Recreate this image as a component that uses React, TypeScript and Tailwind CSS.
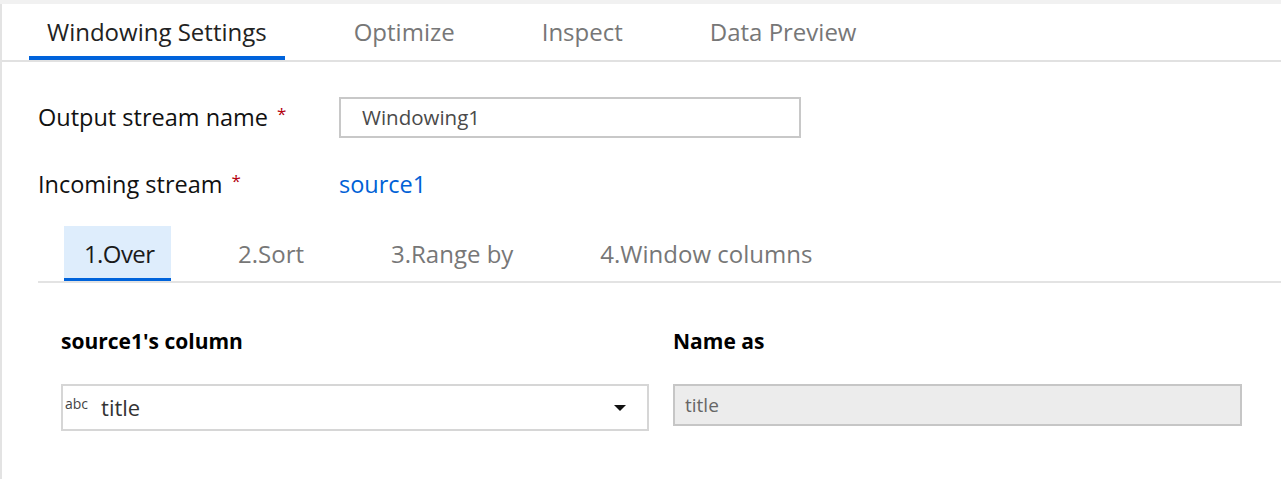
import React from 'react';

const mainTabs = ['Windowing Settings', 'Optimize', 'Inspect', 'Data Preview'];
const stepTabs = ['1.Over', '2.Sort', '3.Range by', '4.Window columns'];

export default function App() {
  return (
    <div
      className="w-[1281px] h-[479px] bg-white overflow-hidden"
      style={{ fontFamily: '"Open Sans", "Noto Sans", sans-serif' }}
    >
      {/* top strip */}
      <div className="h-[4px] bg-[#f1f1f1]" />

      <div className="h-[475px] border-l-2 border-[#e3e3e3]">
        {/* Main tabs */}
        <div className="flex gap-[51px] pl-[27px] border-b-2 border-[#e1e1e1] h-[58px]">
          {mainTabs.map((t, i) => (
            <div
              key={t}
              className={
                'px-[18px] flex items-center text-[24px] border-b-4 ' +
                (i === 0 ? 'text-[#222] border-[#0063db]' : 'text-[#777] border-transparent')
              }
            >
              <span className="mt-[3px]">{t}</span>
            </div>
          ))}
        </div>

        {/* Form rows */}
        <div className="pl-[36px] pt-[35px]">
          <div className="flex items-center h-[41px]">
            <div className="w-[301px] text-[23.5px] text-[#111] flex items-start">
              <span>Output stream name</span>
              <span className="text-[#b4000e] ml-[9px] text-[17px] mt-[1px]">*</span>
            </div>
            <div className="w-[462px] h-[41px] border-2 border-[#c8c8c8] flex items-center pl-[21px] text-[20.5px] text-[#4a4a4a]">
              Windowing1
            </div>
          </div>
          <div className="flex items-center h-[30px] mt-[32px]">
            <div className="w-[301px] text-[23.5px] text-[#111] flex items-start">
              <span>Incoming stream</span>
              <span className="text-[#b4000e] ml-[9px] text-[17px] mt-[1px]">*</span>
            </div>
            <div className="text-[23.5px] text-[#0061d6]">source1</div>
          </div>
        </div>

        {/* Step tabs */}
        <div className="ml-[36px] mt-[26px] flex gap-[47px] pl-[26px] border-b-2 border-[#e3e3e3] h-[57px]">
          {stepTabs.map((t, i) => (
            <div
              key={t}
              className={
                'flex items-center text-[24px] border-b-[3px] ' +
                (i === 0
                  ? 'w-[107px] pl-[20px] bg-[#deedfc] text-[#1a1a1a] border-[#0063db] tracking-[-0.6px]'
                  : 'px-[20px] text-[#777] border-transparent')
              }
            >
              <span className="mt-[4px] whitespace-nowrap">{t}</span>
            </div>
          ))}
        </div>

        {/* Columns */}
        <div className="pl-[59px] pt-[45px] flex gap-[24px]">
          <div className="w-[588px]">
            <div className="text-[21px] font-bold text-black h-[26px] leading-[26px]">source1's column</div>
            <div className="mt-[30px] h-[47px] border-2 border-[#d6d6d6] flex items-center pl-[2px] pr-[20px]">
              <span className="text-[14px] text-[#444] self-start mt-[7px]">abc</span>
              <span className="ml-[13px] text-[22px] text-[#333] flex-1">title</span>
              <svg width="14" height="8" viewBox="0 0 14 8">
                <path d="M1 1 L13 1 L7 7 Z" fill="#111" />
              </svg>
            </div>
          </div>
          <div className="w-[569px]">
            <div className="text-[21px] font-bold text-black h-[26px] leading-[26px]">Name as</div>
            <div className="mt-[30px] h-[42px] border-2 border-[#c6c6c6] bg-[#ececec] flex items-center pl-[10px] text-[19px] text-[#666]">
              title
            </div>
          </div>
        </div>
      </div>
    </div>
  );
}
